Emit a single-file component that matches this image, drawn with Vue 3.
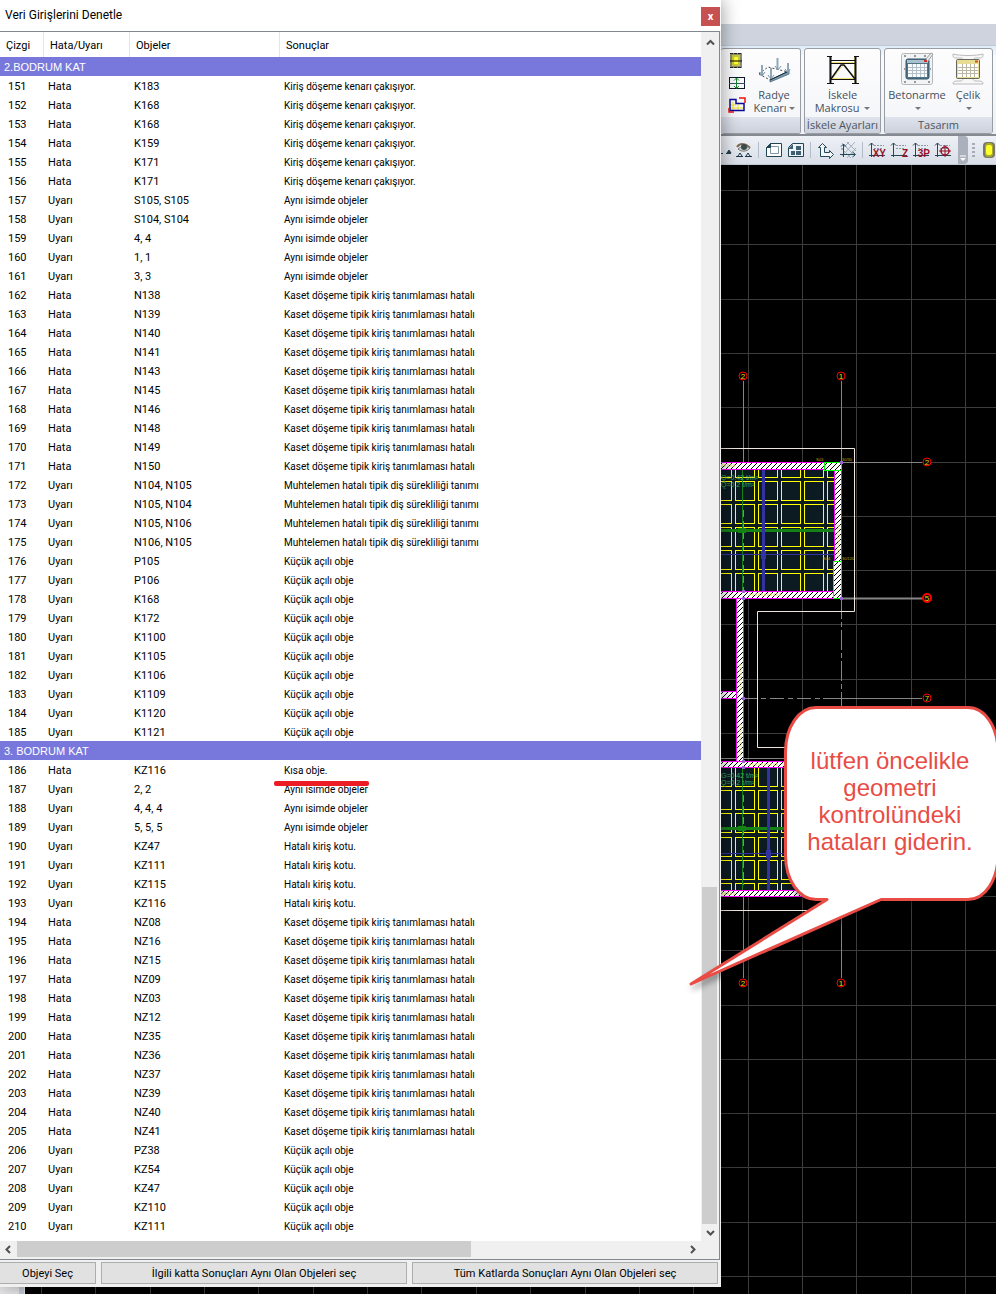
<script setup>
const results = {
  edge: 'Kiriş döşeme kenarı çakışıyor.',
  same: 'Aynı isimde objeler',
  waffle: 'Kaset döşeme tipik kiriş tanımlaması hatalı',
  rib: 'Muhtelemen hatalı tipik diş sürekliliği tanımı',
  angle: 'Küçük açılı obje',
  short: 'Kısa obje.',
  level: 'Hatalı kiriş kotu.',
}

const build = (start, blocks) => {
  let no = start
  return blocks.flatMap(([kind, result, objects]) =>
    objects.map((name) => ({ no: no++, kind, name, result: results[result], marked: result === 'short' })),
  )
}

const floors = [
  {
    title: '2.BODRUM KAT',
    rows: build(151, [
      ['Hata', 'edge', ['K183', 'K168', 'K168', 'K159', 'K171', 'K171']],
      ['Uyarı', 'same', ['S105, S105', 'S104, S104', '4, 4', '1, 1', '3, 3']],
      ['Hata', 'waffle', ['N138', 'N139', 'N140', 'N141', 'N143', 'N145', 'N146', 'N148', 'N149', 'N150']],
      ['Uyarı', 'rib', ['N104, N105', 'N105, N104', 'N105, N106', 'N106, N105']],
      ['Uyarı', 'angle', ['P105', 'P106', 'K168', 'K172', 'K1100', 'K1105', 'K1106', 'K1109', 'K1120', 'K1121']],
    ]),
  },
  {
    title: '3. BODRUM KAT',
    rows: build(186, [
      ['Hata', 'short', ['KZ116']],
      ['Uyarı', 'same', ['2, 2', '4, 4, 4', '5, 5, 5']],
      ['Uyarı', 'level', ['KZ47', 'KZ111', 'KZ115', 'KZ116']],
      ['Hata', 'waffle', ['NZ08', 'NZ16', 'NZ15', 'NZ09', 'NZ03', 'NZ12', 'NZ35', 'NZ36', 'NZ37', 'NZ39', 'NZ40', 'NZ41']],
      ['Uyarı', 'angle', ['PZ38', 'KZ54', 'KZ47', 'KZ110', 'KZ111']],
    ]),
  },
]

// Drawing grid
const gridX = Array.from({ length: 18 }, (_, i) => Math.round(41 + i * 54.35) + 0.5)
const gridY = Array.from({ length: 21 }, (_, i) => Math.round(190 + i * 54.3) + 0.5)

// Waffle slab cells
const spansX = [[715, 731], [735, 754], [758, 777], [781, 800], [804, 823], [827, 840]]
const cells = (ys) => ys.flatMap(([y1, y2]) => spansX.map(([x1, x2]) => ({ x: x1 + 0.5, y: y1 + 0.5, w: x2 - x1, h: y2 - y1 })))
const upperCells = cells([[465, 477], [481, 500], [504, 523], [527, 546], [550, 569], [573, 595]])
const lowerCells = cells([[760, 786], [790, 809], [813, 832], [837, 856], [860, 879], [883, 895]])

const walls = [
  { x: 715, y: 462, w: 110, h: 7 },
  { x: 834, y: 469, w: 7, h: 93 },
  { x: 715, y: 591, w: 119, h: 7 },
  { x: 715, y: 691, w: 22, h: 7 },
  { x: 736, y: 598, w: 7, h: 165 },
  { x: 715, y: 761, w: 125, h: 6 },
  { x: 715, y: 890, w: 125, h: 6 },
]

const axes = [
  { x: 743, y: 376, n: '2' },
  { x: 841, y: 376, n: '1' },
  { x: 927, y: 462, n: '2' },
  { x: 927, y: 598, n: '5', heavy: true },
  { x: 927, y: 698, n: '7' },
  { x: 743, y: 983, n: '2' },
  { x: 841, y: 983, n: '1' },
]
</script>

<template>
  <div class="desktop">
    <main class="app">
      <div class="caption"></div>
      <div class="tabs"></div>
      <div class="ribbon">
        <section class="group first">
          <div class="group-body">
            <div class="small-tools">
              <button type="button" aria-label="Kolon">
                <svg width="18" height="16" viewBox="0 0 18 16">
                  <rect x="2" y="0" width="12" height="15" fill="#8a8a72" />
                  <rect x="4" y="2" width="8" height="11" fill="#c8c83a" />
                  <rect x="6" y="4" width="4" height="7" fill="#ffff30" />
                  <path d="M2 .5h12M2 14.500h12" stroke="#222" stroke-dasharray="3 1" />
                  <path d="M2 8h12" stroke="#000" />
                </svg>
              </button>
              <button type="button" aria-label="Yükseklik">
                <svg width="18" height="16" viewBox="0 0 18 16" fill="none">
                  <rect x="1.500" y="2.500" width="15" height="11" stroke="#10182a" />
                  <path d="M1 8.500h16" stroke="#33506a" />
                  <path d="M8.500 3v10M6 5.500l2.500-2.500 2.500 2.500M6 11l2.500 2.500L11 11" stroke="#11852b" />
                </svg>
              </button>
              <button type="button" aria-label="Kenar">
                <svg width="18" height="16" viewBox="0 0 18 16" fill="none">
                  <path d="M5 5v9M10 5v9M2 11h14M2 8h6" stroke="#f2e21d" />
                  <path d="M2 2.500h6v4h8v7H2z" stroke="#0a0a9a" stroke-width="1.500" />
                  <path d="M11 1h6v5M1 11v4h5" stroke="#e11" stroke-width="1.500" />
                </svg>
              </button>
            </div>
            <button type="button" class="tool">
              <svg width="34" height="34" viewBox="0 0 34 34" fill="none">
                <path d="M2 22l9-7 20 5" stroke="#444" stroke-dasharray="2 2" />
                <path d="M2 22l11 6" stroke="#444" stroke-dasharray="2 2" />
                <path d="M13 28l19-9v3l-19 8z" fill="#7899b0" stroke="#5c7b92" />
                <path d="M13 28l19-9" stroke="#17242e" />
                <path d="M5 13v11M14 16v11M20.500 6v12M31 11v9" stroke="#8da8ba" stroke-width="2" />
                <path d="M2 20l3 4 3-4M11 23l3 4 3-4M18 14l3 4 3-4M28 17l3 4 2-4" stroke="#7793a6" />
              </svg>
              <span>Radye</span><span>Kenarı<i class="drop"></i></span>
            </button>
          </div>
          <h2>&nbsp;</h2>
        </section>
        <section class="group second">
          <div class="group-body">
            <button type="button" class="tool">
              <svg width="34" height="34" viewBox="0 0 34 34" fill="none">
                <path d="M5 10.500h24M5 26.500h24M7 26L17 13l12 13M3.500 4v26M28.500 4v26" stroke="#f0e27a" />
                <path d="M4.500 4v28M29.500 4v28" stroke="#111" stroke-width="2" />
                <path d="M1 4.500h5M28 4.500h5M1 31.500h7M26 31.500h7M5 8.500h24M5 11.500h24M5 27.500h24" stroke="#111" />
                <path d="M5 27L15 13h3l11 14" stroke="#111" stroke-width="1.500" />
              </svg>
              <span>İskele</span><span>Makrosu <i class="drop"></i></span>
            </button>
          </div>
          <h2>İskele Ayarları</h2>
        </section>
        <section class="group third">
          <div class="group-body">
            <button type="button" class="tool">
              <svg width="34" height="34" viewBox="0 0 34 34" fill="none">
                <rect x="1.500" y="1.500" width="31" height="31" rx="2" fill="#f2f3f4" stroke="#b6b9bc" />
                <path d="M4 4h2M14 4h2M24 4h2M4 30h2M14 30h2M28 30h2M4 17h1M30 17h1" stroke="#999" stroke-width="2" />
                <rect x="6" y="7" width="23" height="20" rx="2" fill="#537486" stroke="#2f5268" />
                <path d="M7 8h21v3H7z" fill="#a8c1cc" />
                <path d="M8 12h19v13H8z" fill="#f8fafb" />
                <path d="M8 15.500h19M8 18.500h19M8 21.500h19M12.500 12v13M16.500 12v13M20.500 12v13M24.500 12v13" stroke="#b4c0c7" />
                <path d="M24 9h3" stroke="#d52c2c" stroke-width="2" />
                <path d="M26 7l5-6 2 1-5 7" fill="#eee" stroke="#9b9fa2" />
              </svg>
              <span>Betonarme</span><span><i class="drop"></i></span>
            </button>
            <button type="button" class="tool">
              <svg width="34" height="34" viewBox="0 0 34 34" fill="none">
                <path d="M2 2c0 3 0 4 4 4h4c2 0 2 2 2 3v17c0 2-1 3-3 3H6c-3 0-4 1-4 3h30c0-2-1-3-4-3h-3c-2 0-3-1-3-3V9c0-2 1-3 3-3h3c4 0 4-1 4-4-7 2-23 2-30 0z" fill="#f8f8f8" stroke="#bbb" />
                <rect x="5.500" y="7.500" width="23" height="19" rx="1" fill="#e8dc92" stroke="#66675c" />
                <path d="M7 12h20v13H7z" fill="#fff" />
                <path d="M7 15.500h20M7 18.500h20M7 21.500h20M11.500 12v13M15.500 12v13M19.500 12v13M23.500 12v13" stroke="#bbb6a6" />
                <path d="M24 9.500h3" stroke="#d84b35" stroke-width="2" />
              </svg>
              <span>Çelik</span><span><i class="drop"></i></span>
            </button>
          </div>
          <h2>Tasarım</h2>
        </section>
      </div>
      <div class="toolbar">
        <svg class="cut" width="12" height="22" viewBox="0 0 12 22"><path d="M0 14.500h2M5 14.500h5M6 14l2-3 2 3z" stroke="#24404d" fill="#24404d" /></svg>
        <button type="button" aria-label="Görünüm">
          <svg width="22" height="22" viewBox="0 0 22 22" fill="none">
            <path d="M4 8c3-4 9-4 13 1" stroke="#79694e" stroke-width="2" />
            <path d="M5 10c3 3 9 3 12-1-4-2-9-2-12 1z" fill="#cfd3cf" stroke="#777" />
            <circle cx="11" cy="8" r="3" fill="#3c4c4c" />
            <path d="M3 17.500h7M5 17l2-3 2 3M12 17.500h7M13 17l2-3 2 3" stroke="#183647" />
          </svg>
        </button>
        <i class="sep"></i>
        <button type="button" aria-label="Pencere">
          <svg width="22" height="22" viewBox="0 0 22 22" stroke="#214653">
            <path d="M3.500 8.500l4-4h11v13h-15z" fill="#fff" />
            <path d="M7.500 7.500h8v7h-8z" fill="#fff" stroke="#8299a4" />
            <path d="M3.500 8.500l4-4v4z" fill="#214653" />
          </svg>
        </button>
        <button type="button" aria-label="Pencereler">
          <svg width="22" height="22" viewBox="0 0 22 22">
            <path d="M3.500 8.500l4-4h11v13h-15z" fill="#eef3f7" stroke="#214653" />
            <path d="M4 9l4-4v5H4zM11 7h5v4h-5zM6 12h4v4H6zM11 12h5v4h-5z" fill="#3e6071" />
          </svg>
        </button>
        <i class="sep"></i>
        <button type="button" aria-label="Yön">
          <svg width="22" height="22" viewBox="0 0 22 22" fill="#f4f8fb" stroke="#23485a">
            <path d="M3.500 8.500l4-4 4 4h-2v5h5v-2l4 4-4 4v-2h-9v-9z" />
          </svg>
        </button>
        <button type="button" aria-label="Izgara">
          <svg width="22" height="22" viewBox="0 0 22 22" fill="none">
            <path d="M5 4l13 13M10 3l9 9M4 9l10 10M18 3L5 17M19 9l-9 10M12 3L4 11" stroke="#a3b0bd" />
            <path d="M6.500 18V5M4 7.500L6.500 5 9 7.500M3 15.500h15M15.500 13l3 2.500-3 2.500" stroke="#23485a" />
          </svg>
        </button>
        <i class="sep"></i>
        <button v-for="label in ['XY', 'Z', '3P', '']" :key="label" type="button" :aria-label="'Düzlem ' + label">
          <svg width="22" height="22" viewBox="0 0 22 22" fill="none">
            <path d="M4.500 4v14M2 6.500L4.500 4 7 6.500M2 16.500h16" stroke="#24475a" />
            <path d="M7 6.500h10M7 9.500h8" stroke="#8a9aa8" stroke-dasharray="2 1" />
            <text v-if="label" x="19" y="18" text-anchor="end" class="plane">{{ label }}</text>
            <g v-else stroke="#971127"><circle cx="12" cy="12" r="4" stroke-width="1.500" /><path d="M6 12h12M12 6v12" /></g>
          </svg>
        </button>
        <button type="button" class="overflow" aria-label="Diğer">
          <svg width="10" height="28" viewBox="0 0 10 28"><path d="M2 20h6" stroke="#fff" /><path d="M2 22h6l-3 3z" fill="#fff" /></svg>
        </button>
        <i class="grip"></i>
        <button type="button" class="lamp" aria-label="Kolon">
          <svg width="12" height="16" viewBox="0 0 12 16">
            <rect width="12" height="16" rx="4" fill="#77786a" /><rect x="2" y="1" width="8" height="14" rx="3" fill="#a9a92b" /><rect x="3" y="3" width="6" height="10" rx="2" fill="#ffff2a" />
          </svg>
        </button>
      </div>
      <div class="canvas">
        <svg width="100%" height="100%">
          <defs>
            <pattern id="hatch" width="5" height="5" patternUnits="userSpaceOnUse">
              <rect width="5" height="5" fill="#fff" />
              <path d="M0 4h1v1H0zM1 3h1v1H1zM2 2h1v1H2zM3 1h1v1H3zM4 0h1v1H4z" fill="#000" />
            </pattern>
            <clipPath id="upper"><rect x="715" y="469" width="119" height="122" /></clipPath>
            <clipPath id="lower"><rect x="715" y="767" width="125" height="123" /></clipPath>
          </defs>
          <g transform="translate(0 -165)" fill="none">
            <g stroke="#3c3c3c">
              <line v-for="x in gridX" :key="'x' + x" :x1="x" :x2="x" y1="165" y2="1400" />
              <line v-for="y in gridY" :key="'y' + y" x1="0" x2="1000" :y1="y" :y2="y" />
            </g>
            <path d="M0 1200h25v200H0z" fill="#e6e6e8" /><path d="M19 1200h5v200h-5z" fill="#c4cbd9" />
            <g stroke="#858585">
              <path d="M743.500 381v82M841.500 381v82M841 462.500h81M743.500 896v82M841.500 896v82" />
              <path d="M841 598.500h81" stroke-width="2" />
              <path d="M841.500 599v110" stroke-dasharray="20 3 5 3" />
              <path d="M743 698.500h80" stroke-dasharray="14 4 5 4" />
              <path d="M823 698.500h99M721 758.500h70" />
            </g>
            <path d="M715 448.500h139.500v163h-97v136H800M715 910.500h140" stroke="#eee6dc" />

            <g clip-path="url(#upper)">
              <rect x="715" y="469" width="119" height="122" fill="#0c1a22" />
              <rect v-for="(c, i) in upperCells" :key="i" :x="c.x" :y="c.y" :width="c.w" :height="c.h" stroke="#ff0" />
              <path d="M715 530.500h119" stroke="#148214" stroke-width="3" />
              <path d="M742.500 470v121" stroke="#148214" />
              <path d="M743.500 510v80" stroke="#888" stroke-dasharray="7 4" />
              <path d="M763.500 469v122" stroke="#3232a0" stroke-width="3" />
              <path d="M715 554.500h119" stroke="#3232a0" />
              <path d="M738 528h8v5h-8z" fill="#148214" /><path d="M761 551h5v8h-5z" fill="#3232a0" />
            </g>
            <g clip-path="url(#lower)">
              <rect x="715" y="767" width="125" height="123" fill="#0c1a22" />
              <rect v-for="(c, i) in lowerCells" :key="i" :x="c.x" :y="c.y" :width="c.w" :height="c.h" stroke="#ff0" />
              <path d="M715 828.500h125" stroke="#148214" stroke-width="3" />
              <path d="M742.500 767v123" stroke="#148214" />
              <path d="M743.500 795v90" stroke="#888" stroke-dasharray="7 4" />
              <path d="M768.500 767v123" stroke="#3232a0" stroke-width="3" />
              <path d="M715 853.500h125" stroke="#3232a0" />
              <path d="M738 826h8v5h-8z" fill="#148214" /><path d="M766 850h5v8h-5z" fill="#3232a0" />
            </g>

            <rect v-for="(w, i) in walls" :key="i" :x="w.x + 0.5" :y="w.y + 0.5" :width="w.w" :height="w.h" fill="url(#hatch)" stroke="#f0f" />
            <g fill="url(#hatch)" stroke="#0f0">
              <rect x="824.500" y="462.500" width="17" height="8" />
              <rect x="833.500" y="561.500" width="8" height="37" />
            </g>
            <g fill="#9860d0">
              <path d="M742 590h3v3h-3zM742 597h3v3h-3zM840 461h3v3h-3zM840 597h3v3h-3zM742 697h3v3h-3zM742 760h3v3h-3zM742 766h3v3h-3z" />
            </g>
            <path d="M749 594.500h32M838.500 525v32M721 465.500h14M740.500 664v26M740.500 724v32M749 764.500h30M721 893.500h14" stroke="#e8e060" stroke-width="3" stroke-dasharray="2 1" opacity=".5" />
            <g class="load">
              <text x="721" y="480">Q=0.42 t/m²</text><text x="721" y="487">Q=0.2 t/m²</text>
              <text x="721" y="778">G=0.42 t/m²</text><text x="721" y="785">Q=0.2 t/m²</text>
            </g>
            <g class="section">
              <text x="816" y="461">S03</text><text x="842" y="461">30/30</text>
              <text x="823" y="560">S04</text><text x="842" y="560">30/120</text>
            </g>
            <g v-for="(a, i) in axes" :key="'a' + i">
              <circle :cx="a.x" :cy="a.y" r="4" stroke="#f00" :stroke-width="a.heavy ? 2 : 1" fill="#000" />
              <text :x="a.x" :y="a.y + 3" text-anchor="middle" class="axis">{{ a.n }}</text>
            </g>
          </g>
        </svg>
      </div>
    </main>

    <section class="dialog">
      <header class="title">
        <h1>Veri Girişlerini Denetle</h1>
        <button type="button" class="close" aria-label="Kapat">x</button>
      </header>
      <div class="list">
        <table>
          <colgroup><col class="c1" /><col class="c2" /><col class="c3" /><col /></colgroup>
          <thead>
            <tr><th>Çizgi</th><th>Hata/Uyarı</th><th>Objeler</th><th>Sonuçlar</th></tr>
          </thead>
          <tbody v-for="floor in floors" :key="floor.title">
            <tr class="floor"><th colspan="4">{{ floor.title }}</th></tr>
            <tr v-for="row in floor.rows" :key="row.no">
              <td>{{ row.no }}</td><td>{{ row.kind }}</td><td>{{ row.name }}</td>
              <td class="result" :class="{ marked: row.marked }">{{ row.result }}</td>
            </tr>
          </tbody>
        </table>
        <div class="vbar">
          <svg width="17" height="17" viewBox="0 0 17 17"><path d="M5 10.500L8.500 7l3.500 3.500" /></svg>
          <div class="track"><div class="thumb"></div></div>
          <svg width="17" height="17" viewBox="0 0 17 17"><path d="M5 7l3.500 3.500L12 7" /></svg>
        </div>
        <div class="hbar">
          <svg width="17" height="17" viewBox="0 0 17 17"><path d="M10 5L6.500 8.500 10 12" /></svg>
          <div class="track"><div class="thumb"></div></div>
          <svg width="17" height="17" viewBox="0 0 17 17"><path d="M7 5l3.500 3.500L7 12" /></svg>
        </div>
      </div>
      <footer>
        <button type="button" class="b1">Objeyi Seç</button>
        <button type="button" class="b2">İlgili katta Sonuçları Aynı Olan Objeleri seç</button>
        <button type="button" class="b2">Tüm Katlarda Sonuçları Aynı Olan Objeleri seç</button>
      </footer>
    </section>

    <aside class="callout">
      <svg width="316" height="300" viewBox="680 700 316 300">
        <path
          d="M816 707.500H968C985 707.500 998 727 998 752V855C998 880 985 899.500 968 899.500H881L691 984 827 899.500H816C799 899.500 785.500 880 785.500 855V752C785.500 727 799 707.500 816 707.500Z"
          fill="#fff" stroke="#e84c45" stroke-width="3" stroke-linejoin="round"
        />
      </svg>
      <p>lütfen öncelikle geometri kontrolündeki hataları giderin.</p>
    </aside>
  </div>
</template>

<style>
body { background: #fff; }
</style>

<style scoped>
* { box-sizing: border-box; }
h1, h2, p { margin: 0; font-weight: 400; }
button { padding: 0; border: 0; background: none; color: inherit; font: inherit; }
svg { display: block; }

.desktop {
  position: relative;
  display: grid;
  font-family: Roboto, "Liberation Sans", sans-serif;
  font-size: 11px;
  color: #000;
  overflow: hidden;
}
.app, .dialog { grid-area: 1 / 1; }

.app {
  display: flex;
  flex-direction: column;
  margin-right: 6px;
  font-family: "Open Sans", "Noto Sans", sans-serif;
  color: #44505e;
}
.caption { height: 24px; background: #fff; }
.tabs { height: 22px; background: #ced3dd; border-bottom: 1px solid #bfc8d5; }
.ribbon {
  display: flex;
  gap: 3px;
  height: 90px;
  padding: 2px 3px 2px 721px;
  background: linear-gradient(#e0ecfa, #fafbfd 12px, #eef1f6);
  border-bottom: 2px solid #868a92;
}
.group {
  display: flex;
  flex-direction: column;
  height: 86px;
  border: 1px solid #989ca3;
  border-radius: 3px;
  background: linear-gradient(#fdfdfe, #f4f5f8);
  overflow: hidden;
}
.first { width: 80px; border-left: 0; }
.second { width: 77px; }
.third { flex: 1; }
.group-body { display: flex; flex: 1; justify-content: center; }
.group h2 {
  height: 16px;
  font-size: 11px;
  line-height: 15px;
  text-align: center;
  white-space: nowrap;
  background: linear-gradient(#dfe3ec, #ccd1dc);
  color: #4b5661;
}
.small-tools { display: flex; flex-direction: column; gap: 6px; width: 27px; padding: 4px 0 0 7px; }
.tool { display: flex; flex-direction: column; align-items: center; flex: 1; padding-top: 3px; }
.tool span { height: 13px; line-height: 13px; white-space: nowrap; }
.tool svg { margin-bottom: 2px; }
.third .tool:first-child { flex: 0 0 64px; }
.third .tool:last-child { flex: 0 0 38px; }
.third .group-body { justify-content: flex-start; }
.drop {
  display: inline-block;
  margin-left: 2px;
  vertical-align: 2px;
  border: 3px solid transparent;
  border-top: 3px solid #777;
  border-bottom: 0;
}
.toolbar {
  display: flex;
  align-items: center;
  height: 29px;
  padding-left: 721px;
  background: linear-gradient(#eef1f6, #d9dee8);
  border-bottom: 1px solid #c2c8d4;
}
.sep { width: 1px; height: 16px; margin: 0 4px 0 3px; background: #b5bcc9; }
.overflow { margin-left: 3px; background: #aab0bc; border-radius: 0 4px 4px 0; }
.grip { width: 3px; height: 14px; margin: 0 8px 0 4px; background: repeating-linear-gradient(#aab 0 2px, transparent 2px 4px); }
.lamp { flex: none; }
.plane { font: bold 10px "Liberation Sans", sans-serif; fill: #971127; }
.canvas { flex: 1; min-height: 0; background: #000; position: relative; }
.canvas > svg { position: absolute; }
.load { font: 7px "Liberation Sans", sans-serif; fill: #3fae58; }
.section { font: 4px "Liberation Sans", sans-serif; fill: #c8a000; }
.axis { font: 8px "Liberation Sans", sans-serif; fill: #d8e000; }

.dialog {
  position: relative;
  align-self: start;
  width: 721px;
  margin-bottom: 7px;
  background: #f0f0f0;
  box-shadow: 2px 0 16px rgba(0, 0, 0, 0.35);
}
.title { display: flex; justify-content: space-between; height: 31px; padding: 7px 1px 0 5px; background: #fff; }
.title h1 { font-size: 12px; line-height: 16px; }
.close { width: 19px; height: 19px; background: #c75050; color: #fff; font-weight: 700; line-height: 17px; }
.list {
  display: grid;
  grid-template-columns: 1fr 18px;
  margin-right: 1px;
  border: 1px solid #828790;
  border-left: 0;
  background: #fff;
}
table { width: 100%; border-collapse: separate; border-spacing: 0; table-layout: fixed; margin-bottom: 6px; }
.c1 { width: 44px; }
.c2 { width: 86px; }
.c3 { width: 150px; }
thead th {
  height: 25px;
  padding: 2px 0 0 6px;
  border-right: 1px solid #e5e5e5;
  text-align: left;
  font-weight: 400;
}
thead th:last-child { border-right: 0; }
tbody td, tbody th { height: 19px; padding: 2px 0 0 4px; line-height: 17px; text-align: left; font-weight: 400; white-space: nowrap; }
tbody td:first-child { padding-left: 8px; }
.floor { background: #7878dc; color: #fff; font-family: "Liberation Sans", sans-serif; }
.result { font-size: 10px; }
.marked { position: relative; }
.marked::after {
  content: "";
  position: absolute;
  left: -6px;
  top: 21px;
  width: 95px;
  height: 5px;
  border-radius: 2px;
  background: #ed1c24;
}
.vbar, .hbar { display: flex; background: #f0f0f0; }
.vbar { flex-direction: column; padding: 2px 0 0 1px; }
.hbar { grid-column: 1 / -1; height: 18px; padding-right: 18px; }
.vbar path, .hbar path { fill: none; stroke: #505050; stroke-width: 2; }
.track { flex: 1; display: flex; }
.vbar .track { align-items: flex-end; }
.vbar .thumb { width: 15px; height: 28.7%; background: #cdcdcd; }
.hbar .thumb { width: 68%; height: 16px; background: #cdcdcd; }
footer { display: flex; gap: 5px; padding: 2px 3px 3px 0; }
footer button { height: 22px; border: 1px solid #adadad; background: #e1e1e1; }
.b1 { width: 96px; border-left: 0; }
.b2 { flex: 1; }

.callout { position: absolute; left: 680px; top: 700px; width: 316px; height: 300px; overflow: hidden; }
.callout svg { filter: drop-shadow(2px 4px 3px rgba(0, 0, 0, 0.4)); }
.callout p {
  position: absolute;
  left: 115px;
  top: 47px;
  width: 190px;
  font: 24px/27px "Liberation Sans", sans-serif;
  text-align: center;
  color: #e84c45;
}
</style>
